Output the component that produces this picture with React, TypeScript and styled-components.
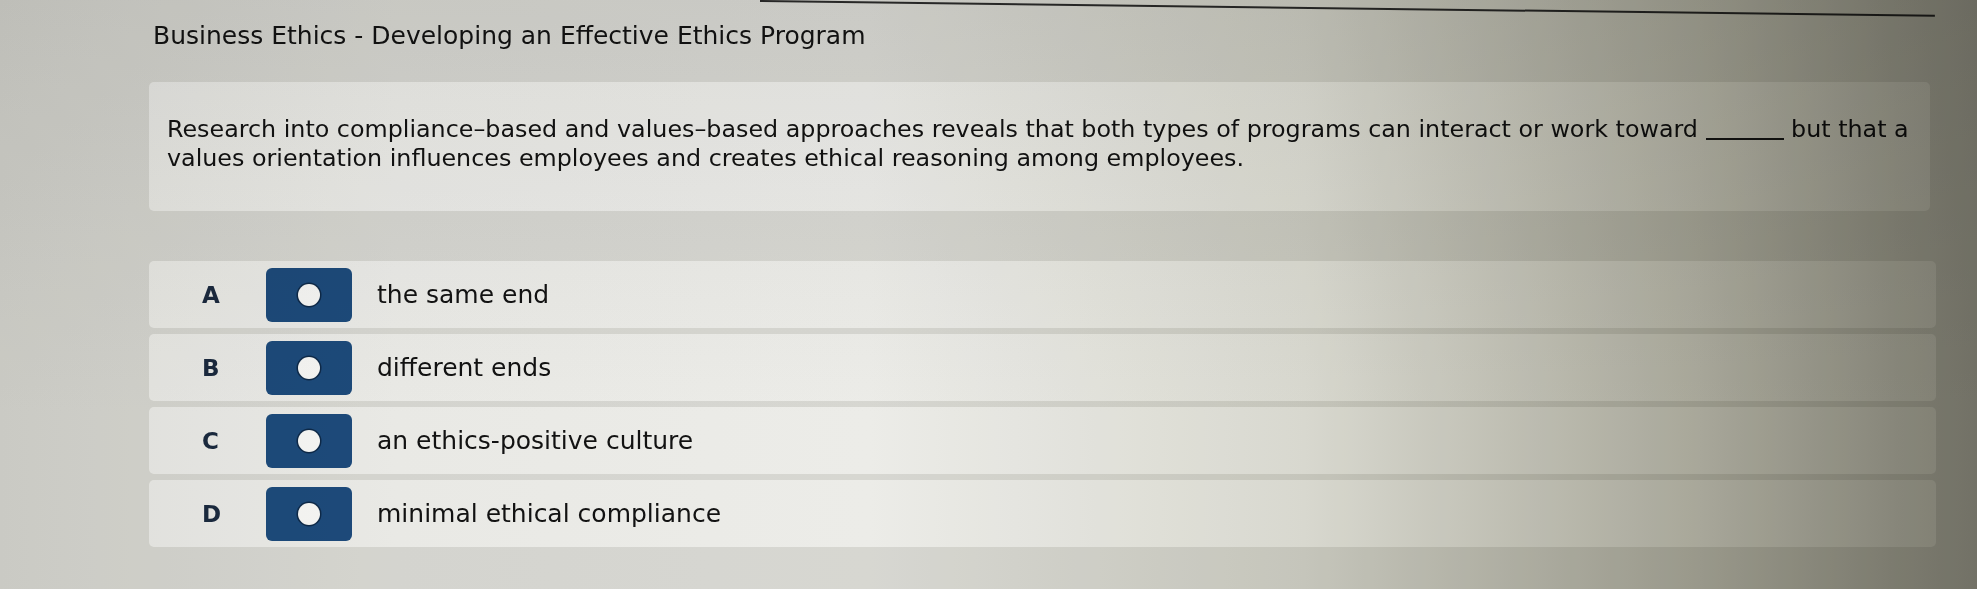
import React from 'react'
import styled, { createGlobalStyle } from 'styled-components'

const GlobalStyle = createGlobalStyle`
  html, body {
    margin: 0;
    padding: 0;
    background: #d9d9d5;
  }
  body {
    font-family: 'DejaVu Sans', Verdana, sans-serif;
    color: #141414;
    overflow: hidden;
  }
`

const options = [
  { key: 'A', text: 'the same end' },
  { key: 'B', text: 'different ends' },
  { key: 'C', text: 'an ethics-positive culture' },
  { key: 'D', text: 'minimal ethical compliance' },
]

export default function App() {
  return (
    <>
      <GlobalStyle />
      <Page>
        <TopRule />
        <Title>Business Ethics - Developing an Effective Ethics Program</Title>

        <QuestionCard>
          Research into compliance–based and values–based approaches reveals that both types of
          programs can interact or work toward <Blank /> but that a
          <br />
          values orientation influences employees and creates ethical reasoning among employees.
        </QuestionCard>

        <OptionList>
          {options.map((opt) => (
            <OptionRow key={opt.key}>
              <OptionKey>{opt.key}</OptionKey>
              <RadioButton type="button" aria-label={opt.text}>
                <RadioDot />
              </RadioButton>
              <OptionText>{opt.text}</OptionText>
            </OptionRow>
          ))}
        </OptionList>

        <Lighting />
      </Page>
    </>
  )
}

const Page = styled.div`
  position: relative;
  width: 1977px;
  height: 589px;
  overflow: hidden;
`

const TopRule = styled.div`
  height: 0;
  width: 1175px;
  margin-left: 760px;
  border-top: 2px solid #2a2a2a;
  transform: rotate(0.72deg);
  transform-origin: left top;
`

const Title = styled.h1`
  margin: 19px 0 0 153px;
  font-size: 25px;
  line-height: 30px;
  font-weight: 400;
  color: #121212;
`

const QuestionCard = styled.div`
  margin: 31px 0 0 149px;
  width: 1781px;
  box-sizing: border-box;
  padding: 33px 18px 38px;
  background: #eeeeec;
  border-radius: 5px;
  font-size: 23.8px;
  line-height: 29px;
  white-space: nowrap;
  color: #121212;
`

const Blank = styled.span`
  display: inline-block;
  width: 78px;
  height: 2px;
  background: #1a1a1a;
  vertical-align: -3px;
`

const OptionList = styled.div`
  display: flex;
  flex-direction: column;
  gap: 6px;
  margin: 50px 0 0 149px;
  width: 1787px;
`

const OptionRow = styled.div`
  display: flex;
  align-items: center;
  height: 67px;
  padding-left: 53px;
  background: #eeeeec;
  border-radius: 5px;
`

const OptionKey = styled.span`
  width: 64px;
  font-size: 23px;
  font-weight: 700;
  color: #1b2a40;
`

const RadioButton = styled.button`
  display: flex;
  align-items: center;
  justify-content: center;
  width: 86px;
  height: 54px;
  padding: 0;
  border: none;
  border-radius: 6px;
  background: #1d4b7d;
  cursor: pointer;
`

const RadioDot = styled.span`
  width: 22px;
  height: 22px;
  border-radius: 50%;
  background: #fafafa;
  box-shadow: 0 0 0 1.5px #0e2a4a;
`

const OptionText = styled.span`
  margin-left: 25px;
  font-size: 25px;
  color: #121212;
`

const Lighting = styled.div`
  position: absolute;
  inset: 0;
  pointer-events: none;
  mix-blend-mode: multiply;
  background-image:
    linear-gradient(to bottom, rgb(240, 240, 240) 0%, rgb(255, 255, 255) 70%),
    linear-gradient(
      to right,
      rgb(238, 238, 235) 0%,
      rgb(250, 250, 248) 20%,
      rgb(253, 253, 251) 44%,
      rgb(232, 232, 224) 66%,
      rgb(180, 179, 166) 86%,
      rgb(145, 144, 132) 96%,
      rgb(134, 133, 122) 100%
    );
  background-blend-mode: multiply;
`
